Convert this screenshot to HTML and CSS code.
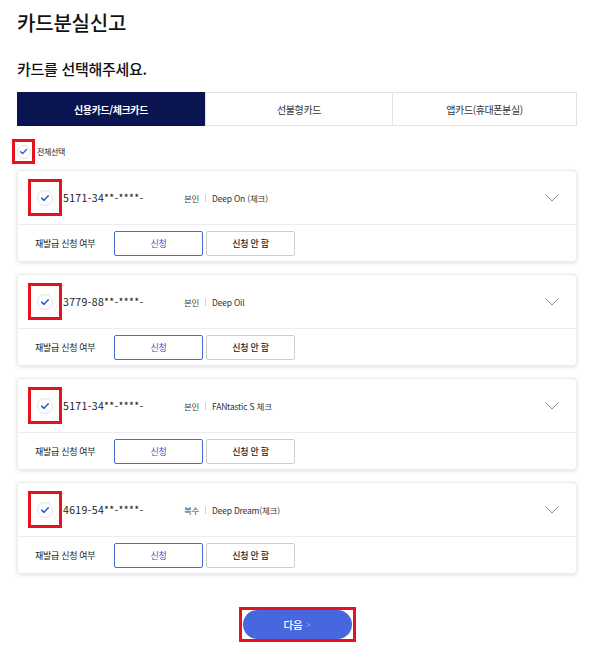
FILE: index.html
```html
<!DOCTYPE html>
<html lang="ko">
<head>
<meta charset="utf-8">
<title>카드분실신고</title>
<link rel="stylesheet" href="styles.css">
</head>
<body>
<div class="page">
  <h1 class="title">카드분실신고</h1>
  <h2 class="subtitle">카드를 선택해주세요.</h2>

  <div class="tabs">
    <div class="tab active">신용카드/체크카드</div>
    <div class="tab">선불형카드</div>
    <div class="tab">앱카드(휴대폰분실)</div>
  </div>

  <div class="select-all">
    <span class="mark mark-small">
      <span class="circle circle-small">
        <svg viewBox="0 0 12 12" width="9" height="9"><path d="M2 6.2 L4.8 8.8 L10 3.4" fill="none" stroke="#2d55d6" stroke-width="1.8" stroke-linecap="round" stroke-linejoin="round"/></svg>
      </span>
    </span>
    <span class="select-all-label">전체선택</span>
  </div>

  <div class="cards">
    <div class="card">
      <div class="card-top">
        <span class="mark">
          <span class="circle">
            <svg viewBox="0 0 12 12" width="10" height="10"><path d="M2 6.2 L4.8 8.8 L10 3.4" fill="none" stroke="#2d55d6" stroke-width="1.8" stroke-linecap="round" stroke-linejoin="round"/></svg>
          </span>
        </span>
        <span class="card-no">5171-34**-****-</span>
        <span class="owner">본인</span>
        <span class="sep"></span>
        <span class="card-name">Deep On (체크)</span>
        <svg class="chev" viewBox="0 0 14 8" width="14" height="8"><path d="M0.5 0.5 L7 7 L13.5 0.5" fill="none" stroke="#8c8c8c" stroke-width="1"/></svg>
      </div>
      <div class="card-bottom">
        <span class="reissue">재발급 신청 여부</span>
        <span class="btn btn-on">신청</span>
        <span class="btn btn-off">신청 안 함</span>
      </div>
    </div>

    <div class="card">
      <div class="card-top">
        <span class="mark">
          <span class="circle">
            <svg viewBox="0 0 12 12" width="10" height="10"><path d="M2 6.2 L4.8 8.8 L10 3.4" fill="none" stroke="#2d55d6" stroke-width="1.8" stroke-linecap="round" stroke-linejoin="round"/></svg>
          </span>
        </span>
        <span class="card-no">3779-88**-****-</span>
        <span class="owner">본인</span>
        <span class="sep"></span>
        <span class="card-name">Deep Oil</span>
        <svg class="chev" viewBox="0 0 14 8" width="14" height="8"><path d="M0.5 0.5 L7 7 L13.5 0.5" fill="none" stroke="#8c8c8c" stroke-width="1"/></svg>
      </div>
      <div class="card-bottom">
        <span class="reissue">재발급 신청 여부</span>
        <span class="btn btn-on">신청</span>
        <span class="btn btn-off">신청 안 함</span>
      </div>
    </div>

    <div class="card">
      <div class="card-top">
        <span class="mark">
          <span class="circle">
            <svg viewBox="0 0 12 12" width="10" height="10"><path d="M2 6.2 L4.8 8.8 L10 3.4" fill="none" stroke="#2d55d6" stroke-width="1.8" stroke-linecap="round" stroke-linejoin="round"/></svg>
          </span>
        </span>
        <span class="card-no">5171-34**-****-</span>
        <span class="owner">본인</span>
        <span class="sep"></span>
        <span class="card-name">FANtastic S 체크</span>
        <svg class="chev" viewBox="0 0 14 8" width="14" height="8"><path d="M0.5 0.5 L7 7 L13.5 0.5" fill="none" stroke="#8c8c8c" stroke-width="1"/></svg>
      </div>
      <div class="card-bottom">
        <span class="reissue">재발급 신청 여부</span>
        <span class="btn btn-on">신청</span>
        <span class="btn btn-off">신청 안 함</span>
      </div>
    </div>

    <div class="card">
      <div class="card-top">
        <span class="mark">
          <span class="circle">
            <svg viewBox="0 0 12 12" width="10" height="10"><path d="M2 6.2 L4.8 8.8 L10 3.4" fill="none" stroke="#2d55d6" stroke-width="1.8" stroke-linecap="round" stroke-linejoin="round"/></svg>
          </span>
        </span>
        <span class="card-no">4619-54**-****-</span>
        <span class="owner">복수</span>
        <span class="sep"></span>
        <span class="card-name">Deep Dream(체크)</span>
        <svg class="chev" viewBox="0 0 14 8" width="14" height="8"><path d="M0.5 0.5 L7 7 L13.5 0.5" fill="none" stroke="#8c8c8c" stroke-width="1"/></svg>
      </div>
      <div class="card-bottom">
        <span class="reissue">재발급 신청 여부</span>
        <span class="btn btn-on">신청</span>
        <span class="btn btn-off">신청 안 함</span>
      </div>
    </div>
  </div>

  <div class="next-wrap">
    <span class="next-mark">
      <span class="next-btn">다음 <span class="next-arrow">&gt;</span></span>
    </span>
  </div>
</div>
</body>
</html>
```

FILE: styles.css
```css
* {
  box-sizing: border-box;
}

html, body {
  margin: 0;
  padding: 0;
  background: #ffffff;
}

body {
  font-family: "Noto Sans CJK KR", "Noto Sans", sans-serif;
  color: #111;
}

.page {
  width: 600px;
  padding: 9px 23px 0 17px;
}

.title {
  margin: 0;
  font-size: 20px;
  line-height: 28px;
  font-weight: 500;
  color: #111;
  letter-spacing: -0.2px;
}

.subtitle {
  margin: 21px 0 0;
  font-size: 15px;
  line-height: 22px;
  font-weight: 500;
  color: #111;
  letter-spacing: -0.3px;
}

.tabs {
  margin-top: 12px;
  display: grid;
  grid-template-columns: 187px 187px 1fr;
  height: 34px;
  border: 1px solid #e2e2e2;
}

.tab {
  display: flex;
  align-items: center;
  justify-content: center;
  font-size: 10px;
  color: #333;
  letter-spacing: -0.4px;
  border-left: 1px solid #e2e2e2;
}

.tab:first-child {
  border-left: none;
}

.tab.active {
  background: #0a1450;
  color: #fff;
  font-weight: 700;
  margin: -1px 0 -1px -1px;
}

.select-all {
  margin: 13px 0 0 -5px;
  display: flex;
  align-items: center;
  gap: 2px;
  height: 25px;
}

.mark {
  display: inline-flex;
  align-items: center;
  justify-content: center;
  width: 34px;
  height: 37px;
  border: 3px solid #e3141c;
  flex: none;
}

.mark-small {
  width: 23px;
  height: 25px;
}

.circle {
  width: 16px;
  height: 16px;
  border-radius: 50%;
  border: 1px solid #e2e2e2;
  display: inline-flex;
  align-items: center;
  justify-content: center;
  background: #fff;
}

.circle-small {
  width: 14px;
  height: 14px;
}

.select-all-label {
  font-size: 8px;
  color: #222;
  letter-spacing: -0.4px;
}

.cards {
  margin-top: 6px;
  display: flex;
  flex-direction: column;
  gap: 12px;
}

.card {
  border: 1px solid #ececec;
  border-radius: 4px;
  background: #fff;
  box-shadow: 0 1px 4px rgba(0, 0, 0, 0.13);
  height: 92px;
  display: flex;
  flex-direction: column;
}

.card-top {
  height: 54px;
  display: flex;
  align-items: center;
  padding: 0 17px 0 10px;
  border-bottom: 1px solid #ededed;
}

.card-no {
  margin-left: 1px;
  width: 121px;
  font-size: 10.5px;
  color: #1a1a1a;
  letter-spacing: 0.35px;
  font-weight: 400;
}

.owner {
  font-size: 8.5px;
  color: #444;
  letter-spacing: -0.3px;
}

.sep {
  width: 1px;
  height: 8px;
  background: #d5d5d5;
  margin: 0 6px 0 6px;
}

.card-name {
  font-size: 8.5px;
  color: #333;
  letter-spacing: -0.2px;
}

.chev {
  margin-left: auto;
}

.card-bottom {
  flex: 1;
  display: flex;
  align-items: center;
  padding: 0 0 0 17px;
}

.reissue {
  width: 79px;
  font-size: 9px;
  color: #222;
  letter-spacing: -0.3px;
}

.btn {
  display: inline-flex;
  align-items: center;
  justify-content: center;
  width: 89px;
  height: 25px;
  border-radius: 2px;
  font-size: 9px;
  letter-spacing: -0.3px;
}

.btn-on {
  border: 1.5px solid #4a68d6;
  color: #3857cf;
}

.btn-off {
  margin-left: 3px;
  border: 1px solid #cfcfcf;
  color: #222;
  font-weight: 500;
}

.next-wrap {
  margin-top: 33px;
  display: flex;
  justify-content: center;
}

.next-mark {
  display: inline-flex;
  width: 117px;
  height: 35px;
  border: 3px solid #e3141c;
  padding: 0 1px;
}

.next-btn {
  flex: 1;
  display: flex;
  align-items: center;
  justify-content: center;
  gap: 3px;
  background: #4767df;
  border-radius: 15px;
  color: #fff;
  font-size: 10.5px;
  font-weight: 500;
}

.next-arrow {
  color: #a9b8ef;
  font-weight: 300;
  font-size: 9px;
}
```
